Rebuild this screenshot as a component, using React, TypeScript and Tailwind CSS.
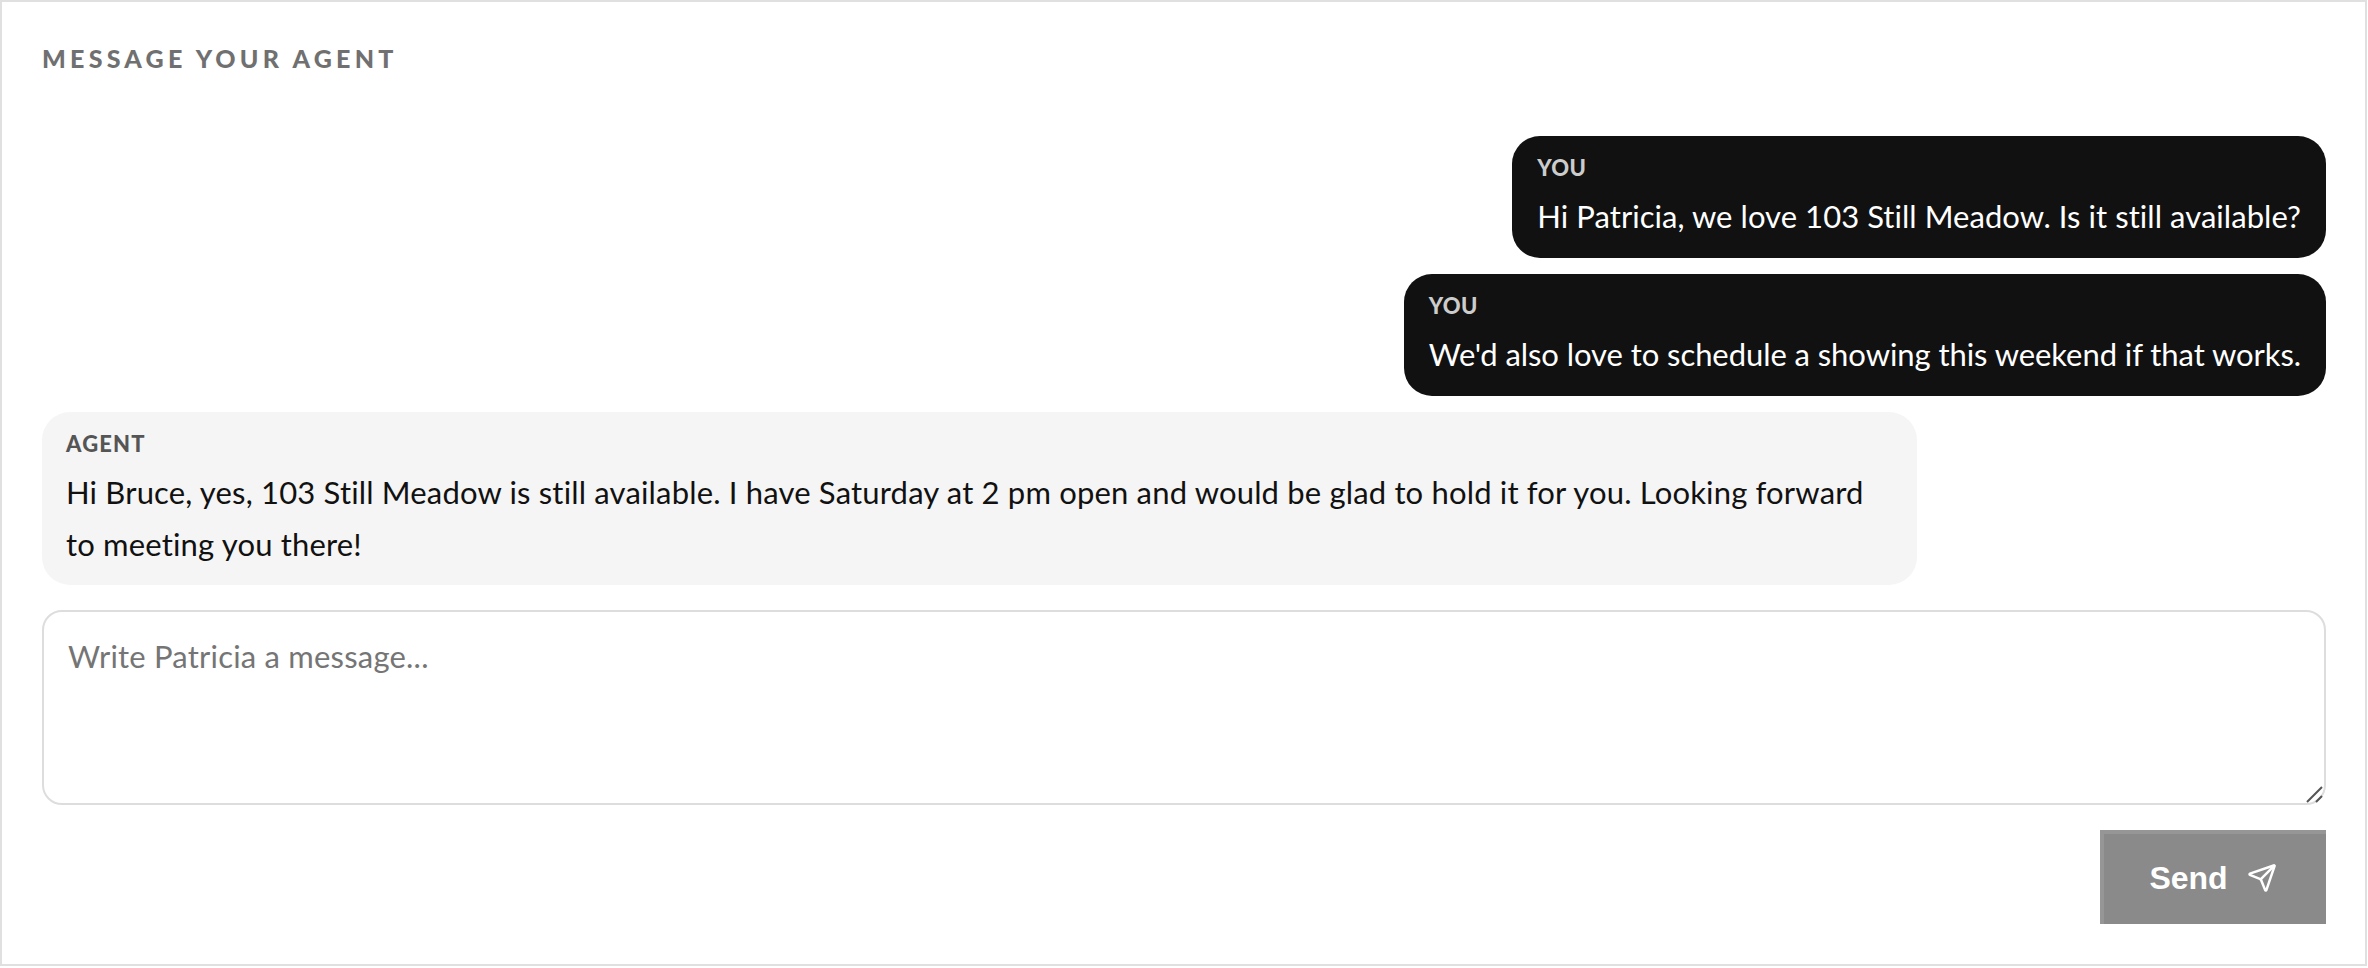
import { Send } from 'lucide-react';

const font = "font-['Lato','Open_Sans',sans-serif] [font-variant-ligatures:none]";

function Bubble({ label, text, mine, spacing }: { label: string; text: string; mine?: boolean; spacing: string }) {
  return (
    <div
      className={
        mine
          ? 'self-end rounded-[28px] bg-[#111111] pt-[14px] pr-[25px] pb-[16px] pl-[25px] text-white'
          : 'w-[1875px] self-start rounded-[28px] bg-[#f5f5f5] pt-[14px] pr-[45px] pb-[15px] pl-[24px] text-[#111111]'
      }
    >
      <div
        className={
          mine
            ? 'mb-[4px] text-[22px] leading-[36px] font-black tracking-[0.4px] text-[#cccccc]'
            : 'mb-[4px] text-[22px] leading-[36px] font-black tracking-[1.2px] text-[#555555]'
        }
      >
        {label}
      </div>
      <div className={`text-[31px] leading-[52px] ${spacing}`}>{text}</div>
    </div>
  );
}

export default function App() {
  return (
    <div className={`${font} h-[968px] w-[2368px] bg-white`}>
      <div className="box-border flex h-[966px] w-[2367px] flex-col border-2 border-[#e0e0e0] pt-[38px] pr-[39px] pl-[40px]">
        <h2 className="text-[25px] leading-[36px] font-black tracking-[4.25px] text-[#707070]">MESSAGE YOUR AGENT</h2>
        <div className="mt-[60px] flex flex-col gap-[16px]">
          <Bubble mine spacing="tracking-[0.05px]" label="YOU" text="Hi Patricia, we love 103 Still Meadow. Is it still available?" />
          <Bubble mine spacing="tracking-[-0.07px]" label="YOU" text="We'd also love to schedule a showing this weekend if that works." />
          <Bubble
            spacing="tracking-[0.17px]"
            label="AGENT"
            text="Hi Bruce, yes, 103 Still Meadow is still available. I have Saturday at 2 pm open and would be glad to hold it for you. Looking forward to meeting you there!"
          />
        </div>
        <div className="relative mt-[25px] flex">
          <textarea
            placeholder="Write Patricia a message..."
            className="box-border h-[195px] w-full resize-none rounded-[20px] border-2 border-[#dddddd] px-[24px] pt-[21px] pb-[20px] text-[31px] leading-[46px] tracking-[0.2px] outline-none placeholder:text-[#757575]"
          />
          <svg className="absolute right-[2px] bottom-[2px] h-[18px] w-[18px]" viewBox="0 0 18 18" fill="none" stroke="#555555" strokeWidth="2">
            <path d="M1 17 16 2M10 17l6-6" />
          </svg>
        </div>
        <div className="mt-[25px] flex justify-end">
          <button className="box-border flex h-[94px] w-[226px] items-center justify-center gap-[19px] border-t-4 border-l-4 border-t-[#969696] border-l-[#969696] bg-[#8a8a8a] pr-[4px] pb-[3px] font-['Liberation_Sans',sans-serif] text-[32px] font-bold text-white">
            Send
            <Send size={30} strokeWidth={2} />
          </button>
        </div>
      </div>
    </div>
  );
}
